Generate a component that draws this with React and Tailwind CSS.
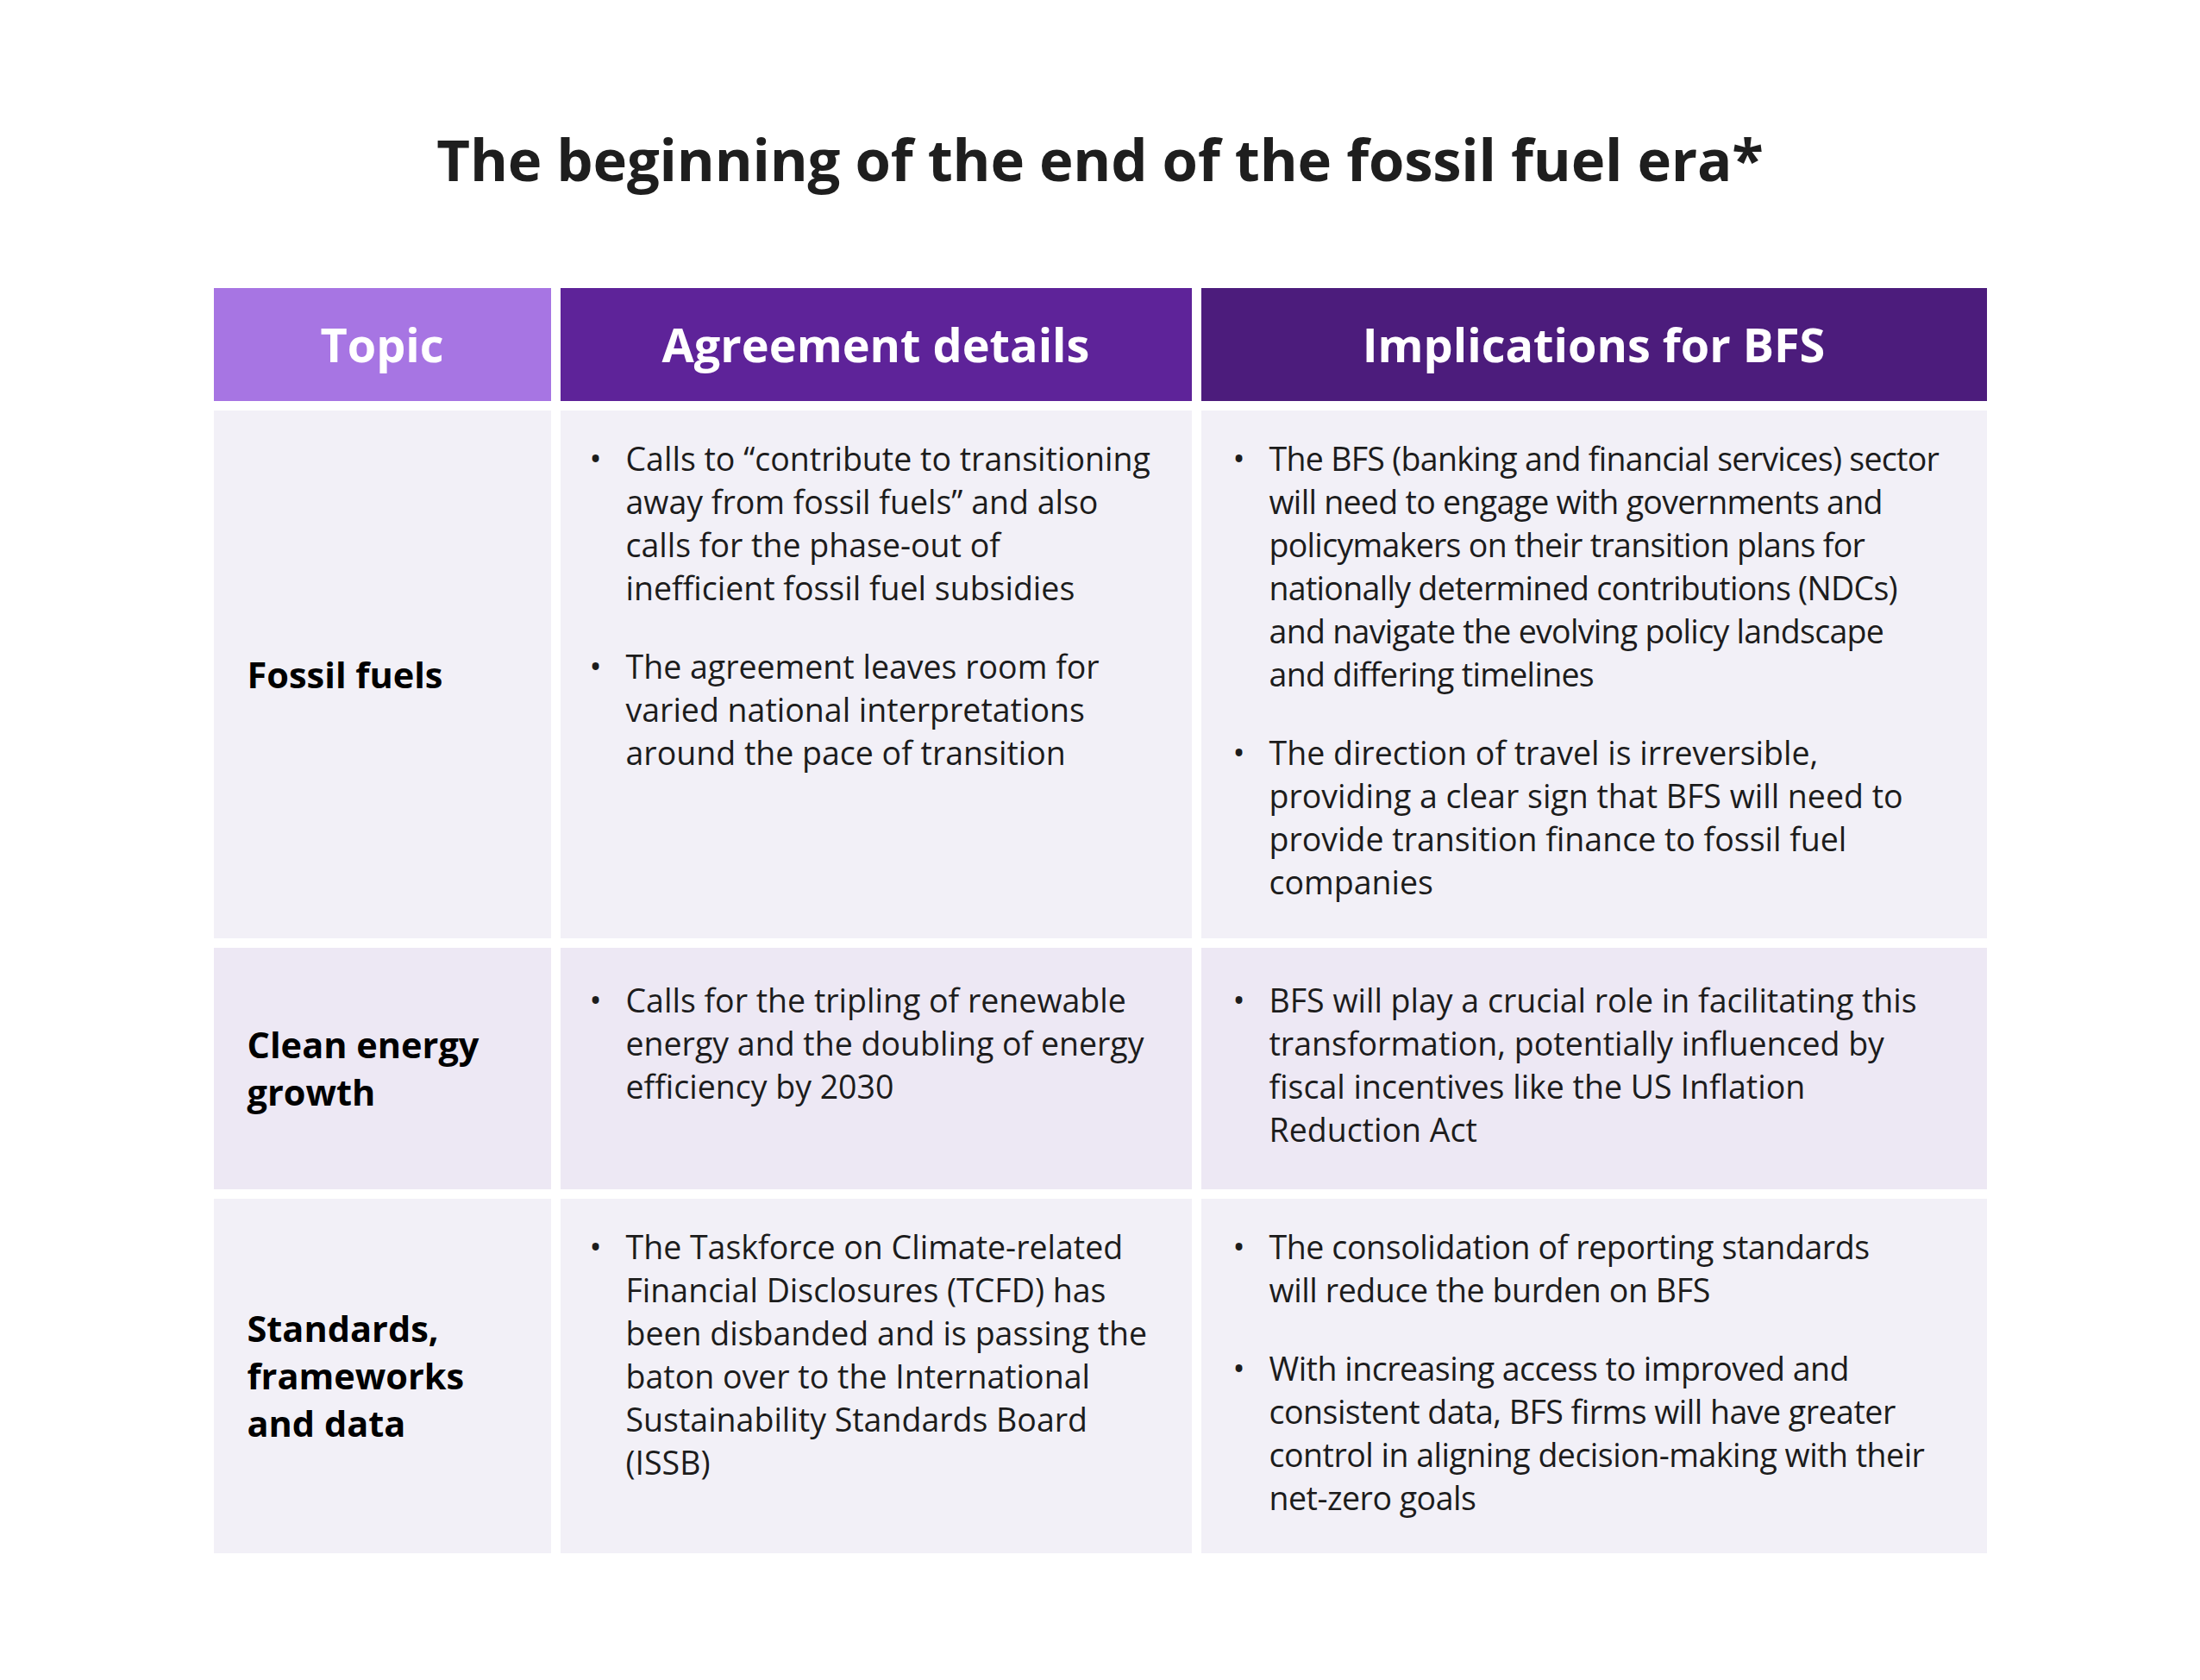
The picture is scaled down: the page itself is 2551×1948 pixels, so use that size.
const font = { fontFamily: '"Open Sans", "Noto Sans", sans-serif' }

// each bullet is kept as its printed lines so the wrap matches the slide
const rows = [
  {
    topic: ['Fossil fuels'],
    bg: 'bg-[#f2f0f7]',
    pad: 'pt-[31px] pb-[40px]',
    details: [
      { lines: ['Calls to “contribute to transitioning', 'away from fossil fuels” and also', 'calls for the phase-out of', 'inefficient fossil fuel subsidies'] },
      { lines: ['The agreement leaves room for', 'varied national interpretations', 'around the pace of transition'] },
    ],
    implications: [
      { tight: 'tracking-[-0.7px]', lines: ['The BFS (banking and financial services) sector', 'will need to engage with governments and', 'policymakers on their transition plans for', 'nationally determined contributions (NDCs)', 'and navigate the evolving policy landscape', 'and differing timelines'] },
      { lines: ['The direction of travel is irreversible,', 'providing a clear sign that BFS will need to', 'provide transition finance to fossil fuel', 'companies'] },
    ],
  },
  {
    topic: ['Clean energy', 'growth'],
    bg: 'bg-[#ede8f4]',
    pad: 'pt-[36px] pb-[44px]',
    details: [
      { lines: ['Calls for the tripling of renewable', 'energy and the doubling of energy', 'efficiency by 2030'] },
    ],
    implications: [
      { lines: ['BFS will play a crucial role in facilitating this', 'transformation, potentially influenced by', 'fiscal incentives like the US Inflation', 'Reduction Act'] },
    ],
  },
  {
    topic: ['Standards,', 'frameworks', 'and data'],
    bg: 'bg-[#f2f0f7]',
    pad: 'pt-[31px] pb-[39px]',
    details: [
      { lines: ['The Taskforce on Climate-related', 'Financial Disclosures (TCFD) has', 'been disbanded and is passing the', 'baton over to the International', 'Sustainability Standards Board', '(ISSB)'] },
    ],
    implications: [
      { tight: 'tracking-[-0.4px]', lines: ['The consolidation of reporting standards', 'will reduce the burden on BFS'] },
      { tight: 'tracking-[-0.5px]', lines: ['With increasing access to improved and', 'consistent data, BFS firms will have greater', 'control in aligning decision-making with their', 'net-zero goals'] },
    ],
  },
]

function Lines({ lines }) {
  return lines.map((l, i) => (
    <span key={i} className="block whitespace-nowrap">{l}</span>
  ))
}

function Bullets({ items }) {
  return (
    <ul className="flex flex-col gap-[41px]">
      {items.map((item, i) => (
        <li key={i} className="flex">
          <span className="w-[42px] shrink-0">•</span>
          <div className={item.tight}>
            <Lines lines={item.lines} />
          </div>
        </li>
      ))}
    </ul>
  )
}

export default function App() {
  return (
    <div className="w-[2551px] min-h-[1948px] bg-white text-[#1c1c1c]" style={font}>
      <h1 className="pt-[143px] text-center text-[67px] leading-[82px] font-bold tracking-[-0.2px] text-[#1e1e1e]">
        The beginning of the end of the fossil fuel era*
      </h1>

      <div className="mt-[109px] mx-auto w-[2056px] grid grid-cols-[391px_732px_911px] gap-[11px]">
        <div className="h-[131px] flex items-center justify-center bg-[#a775e3] text-white text-[54px] font-bold">
          Topic
        </div>
        <div className="h-[131px] flex items-center justify-center bg-[#5e2399] text-white text-[54px] font-bold">
          Agreement details
        </div>
        <div className="h-[131px] flex items-center justify-center bg-[#4c1c7c] text-white text-[54px] font-bold">
          Implications for BFS
        </div>

        {rows.map(row => (
          <div key={row.topic.join(' ')} className="contents">
            <div className={`${row.bg} flex items-center pl-[39px] text-[41.5px] leading-[55px] font-bold text-black`}>
              <div>
                <Lines lines={row.topic} />
              </div>
            </div>
            <div className={`${row.bg} ${row.pad} pl-[34px] text-[37.5px] leading-[50px]`}>
              <Bullets items={row.details} />
            </div>
            <div className={`${row.bg} ${row.pad} pl-[37px] text-[37.5px] leading-[50px]`}>
              <Bullets items={row.implications} />
            </div>
          </div>
        ))}
      </div>
    </div>
  )
}
